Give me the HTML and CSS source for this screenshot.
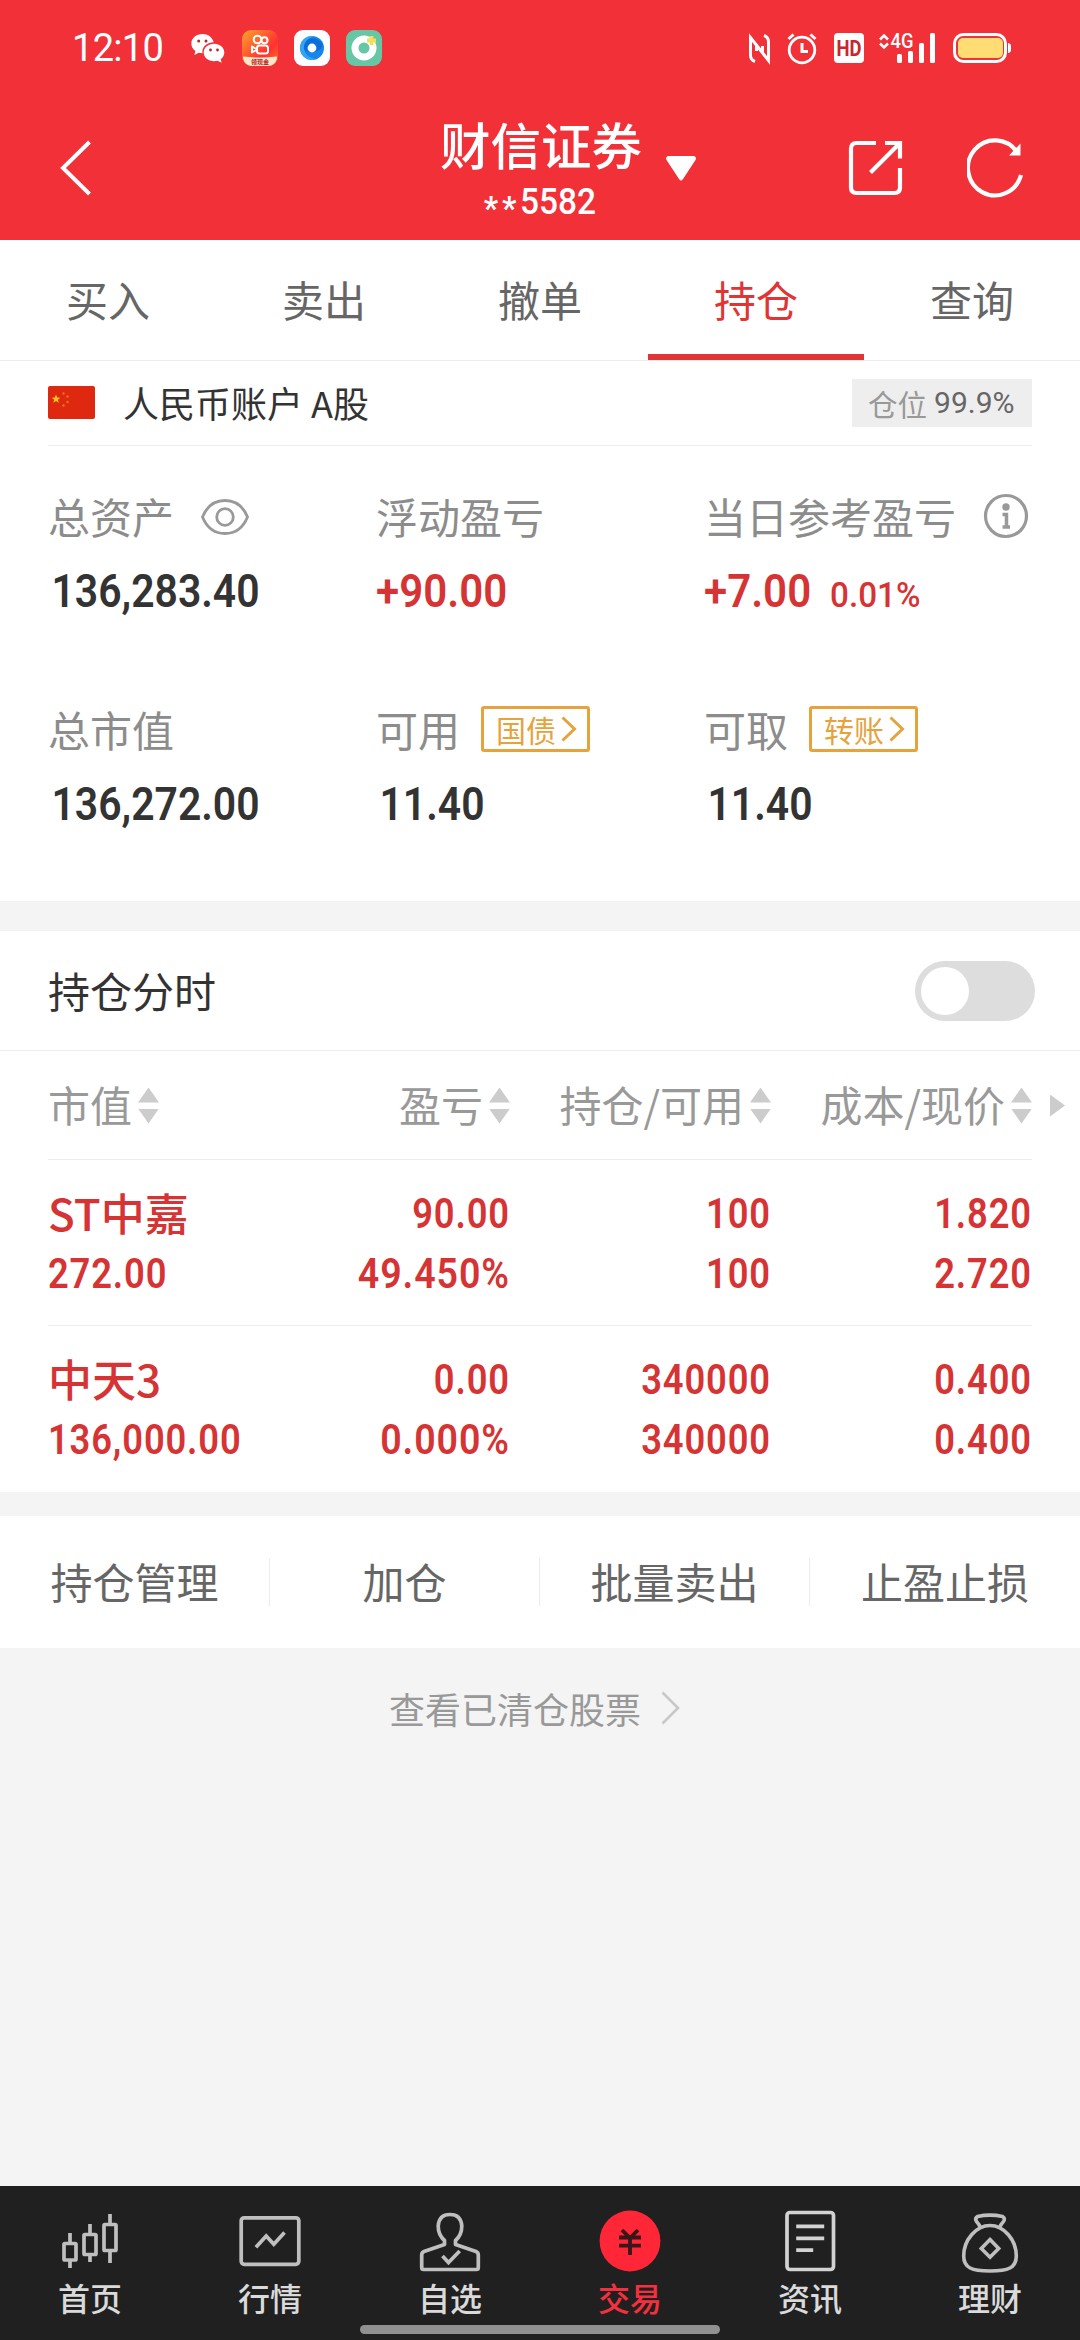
FILE: index.html
```html
<!DOCTYPE html>
<html lang="zh-CN">
<head>
<meta charset="utf-8">
<title>持仓</title>
<link rel="stylesheet" href="styles.css">
</head>
<body>
<div class="app">
  <header class="top">
    <div class="status">
      <div class="status-left">
        <span class="clock">12:10</span>
        <svg class="s-wechat" width="34" height="30" viewBox="0 0 34 30"><path fill="#fff" d="M11.500 1C5.200 1 .3 5.200.3 10.500c0 3 1.600 5.600 4.100 7.400L3.300 22l4.500-2.300c1.200.3 2.400.5 3.700.5-1-6 4-11 11.200-11C21.500 4.500 17 1 11.500 1z"/><path fill="#fff" d="M33.300 19.500c0-4.900-4.500-8.700-10.200-8.700S12.700 14.700 12.700 19.500s4.600 8.800 10.400 8.800c1.200 0 2.300-.2 3.400-.5l4.200 2-1.100-3.500c2.300-1.700 3.700-4 3.700-6.800z"/><g fill="#b9252d"><circle cx="7.700" cy="8" r="1.500"/><circle cx="15" cy="8" r="1.500"/><circle cx="19.500" cy="17" r="1.400"/><circle cx="26.500" cy="17" r="1.400"/></g></svg>
        <svg width="36" height="36" viewBox="0 0 36 36"><defs><linearGradient id="ks" x1="0" y1="0" x2="1" y2="1"><stop offset="0" stop-color="#ffa42b"/><stop offset=".65" stop-color="#fe3130"/><stop offset="1" stop-color="#ff7a22"/></linearGradient></defs><rect width="36" height="36" rx="9" fill="url(#ks)"/><path d="M1 26.500q17 2 34 0v2q-2 7.500-9 7.500H10q-7 0-9-7.500z" fill="#ffe6c8"/><g fill="none" stroke="#fff" stroke-width="2"><circle cx="15.500" cy="9.500" r="3.800"/><circle cx="22.500" cy="10.300" r="3"/><rect x="15" y="15.500" width="11" height="8" rx="2.500"/><path d="M15 19.500 10 16.500v6z" stroke-linejoin="round"/></g><text x="9" y="34" font-size="6" class="mini">领现金</text></svg>
        <svg width="36" height="36" viewBox="0 0 36 36"><rect width="36" height="36" rx="9" fill="#fbfdff"/><circle cx="18" cy="18" r="12" fill="#1686ea"/><path d="M7 14Q18 2 29 14q-2 8-11 8-10 0-11-8z" fill="#0b6fd6"/><path d="M6 18a12 12 0 0 1 15-11.600Q9 9 10 19q1 8 12 10A12 12 0 0 1 6 18z" fill="#35a4f5"/><circle cx="18" cy="18" r="4.400" fill="#fff"/></svg>
        <svg width="36" height="36" viewBox="0 0 36 36"><rect width="36" height="36" rx="9" fill="#67c6a4"/><circle cx="18" cy="18" r="9" fill="none" stroke="#fff" stroke-width="7"/><path d="M25.500 6v9M21 10.500h9" stroke="#f5de5c" stroke-width="3.800"/></svg>
      </div>
      <svg class="status-right" width="270" height="36" viewBox="744 30 270 36">
        <g fill="none" stroke="#fff">
          <path stroke-width="3" d="M755 61.500Q750.500 60 750.500 55V37.500L768.500 60.500V42Q768.500 37 764 35.500"/><path stroke-width="3" d="M756.500 51V44M762.500 46v7"/>
          <circle cx="802" cy="50" r="12.800" stroke-width="2.800"/><path stroke-width="3" d="M802 43v8.500h6M788.500 39l5-4.500M815.500 39l-5-4.500"/>
          <path stroke-width="2.600" d="M880 39.500l4-4 4 4M880 43.500l4 4 4-4"/>
          <rect x="954.500" y="34.500" width="51" height="27" rx="9" stroke-width="3"/>
        </g>
        <rect x="834" y="33" width="30" height="30" rx="4" fill="#fff"/>
        <text class="hd" x="836.500" y="55.500" textLength="25" lengthAdjust="spacingAndGlyphs">HD</text>
        <text class="g4" x="890.500" y="48" textLength="23" lengthAdjust="spacingAndGlyphs">4G</text>
        <g fill="#fff"><rect x="897" y="54" width="5" height="9" rx="1.500"/><rect x="908" y="51" width="5" height="12" rx="1.500"/><rect x="919" y="43" width="5" height="20" rx="1.500"/><rect x="930" y="33" width="5" height="30" rx="1.500"/><path d="M1008 43q3 .5 3 3v4q0 2.500-3 3z"/></g>
        <rect x="958" y="38" width="45" height="20" rx="5" fill="#ffdc74"/>
      </svg>
    </div>
    <div class="titlebar">
      <div class="back"><svg width="34" height="58" viewBox="0 0 34 58"><path d="M31.500 3 5 29l26.500 26" fill="none" stroke="#fff" stroke-width="4"/></svg></div>
      <div class="title"><div class="broker">财信证券</div><div class="acct"><span class="stars">**</span>5582</div></div>
      <div class="tools">
        <svg class="caret" width="30" height="25" viewBox="0 0 30 25"><path d="M2 0h26q3 1 1.500 4L17 23q-2 3-4 0L.5 4Q-1 1 2 0z" fill="#fff"/></svg>
        <svg class="share" width="56" height="56" viewBox="0 0 56 56"><g fill="none" stroke="#fff" stroke-width="4.200"><path d="M28 3H8.500Q3 3 3 8.500v39Q3 53 8.500 53h38q5.500 0 5.500-5.500V28"/><path d="M37 3h15v15.500M52 3 22.500 32.500"/></g></svg>
        <svg width="58" height="60" viewBox="0 0 58 60"><path d="M54 37A27 27.500 0 1 1 50 14" fill="none" stroke="#fff" stroke-width="4.200"/><path d="M53.500 5.500V17.500H42z" fill="#fff"/></svg>
      </div>
    </div>
  </header>

  <nav class="tabs"><a>买入</a><a>卖出</a><a>撤单</a><a class="on">持仓</a><a>查询</a></nav>

  <section class="account">
    <svg class="flag" width="47" height="33" viewBox="0 0 47 33"><rect width="47" height="33" rx="2" fill="#de2910"/><path fill="#ffc31b" d="M8 8.500l1.200 3 3.200.2-2.500 2 .9 3.100L8 15l-2.700 1.800.9-3.100-2.500-2 3.100-.2z"/><g fill="#f0701c"><circle cx="15.500" cy="7.500" r="1.200"/><circle cx="19.500" cy="10.500" r="1.200"/><circle cx="19.500" cy="16" r="1.200"/><circle cx="15.500" cy="19.500" r="1.200"/></g></svg>
    <span class="acct-name">人民币账户 A股</span>
    <span class="pos"><span class="pos-k">仓位</span><span class="pos-v">99.9%</span></span>
  </section>

  <section class="assets">
    <div class="cell"><div class="k">总资产<svg class="eye" width="48" height="36" viewBox="0 0 48 36"><g fill="none" stroke="#999" stroke-width="2.800"><path d="M1.500 18C6 7 14 1.500 24 1.500S42 7 46.500 18C42 29 34 34.500 24 34.500S6 29 1.500 18z"/><circle cx="24" cy="18" r="8.300"/></g></svg></div><div class="v"><span class="n">136,283.40</span></div></div>
    <div class="cell"><div class="k">浮动盈亏</div><div class="v red"><span class="n">+90.00</span></div></div>
    <div class="cell"><div class="k">当日参考盈亏<svg class="info" width="46" height="46" viewBox="0 0 46 46"><circle cx="23" cy="23" r="20.500" fill="none" stroke="#999" stroke-width="3.200"/><circle cx="23" cy="14" r="3.700" fill="#999"/><path d="M19.500 21.500h4V34M19.500 34h7.500" fill="none" stroke="#999" stroke-width="3.500"/></svg></div><div class="v red"><span class="n w7">+7.00</span><span class="pct">0.01%</span></div></div>
    <div class="cell"><div class="k">总市值</div><div class="v"><span class="n">136,272.00</span></div></div>
    <div class="cell"><div class="k">可用<span class="tag">国债<svg width="16" height="26" viewBox="0 0 16 26"><path d="M1.500 1.500 13.500 13 1.500 24.500" fill="none" stroke="#e6a23c" stroke-width="3"/></svg></span></div><div class="v"><span class="n">11.40</span></div></div>
    <div class="cell"><div class="k">可取<span class="tag">转账<svg width="16" height="26" viewBox="0 0 16 26"><path d="M1.500 1.500 13.500 13 1.500 24.500" fill="none" stroke="#e6a23c" stroke-width="3"/></svg></span></div><div class="v"><span class="n">11.40</span></div></div>
  </section>

  <section class="intraday"><span class="label">持仓分时</span><span class="switch"><i></i></span></section>

  <section class="holdings">
    <div class="row head">
      <div class="th"><span>市值</span><i class="sort"></i></div><div class="th"><span>盈亏</span><i class="sort"></i></div><div class="th"><span>持仓/可用</span><i class="sort"></i></div><div class="th"><span>成本/现价</span><i class="sort"></i></div><i class="more"></i>
    </div>
    <div class="row item">
      <div class="td"><b>ST中嘉</b><span>272.00</span></div><div class="td"><span>90.00</span><span class="wide">49.450%</span></div><div class="td"><span>100</span><span>100</span></div><div class="td"><span>1.820</span><span>2.720</span></div>
    </div>
    <div class="row item">
      <div class="td"><b>中天3</b><span>136,000.00</span></div><div class="td"><span>0.00</span><span class="wide">0.000%</span></div><div class="td"><span>340000</span><span>340000</span></div><div class="td"><span>0.400</span><span>0.400</span></div>
    </div>
  </section>

  <nav class="actions"><a>持仓管理</a><a>加仓</a><a>批量卖出</a><a>止盈止损</a></nav>

  <a class="cleared">查看已清仓股票<svg width="19" height="34" viewBox="0 0 19 34"><path d="M1.500 1.500 17 17 1.500 32.500" fill="none" stroke="#c8c8c8" stroke-width="2.600"/></svg></a>

  <footer class="bottom">
    <div class="bar">
      <a><svg width="64" height="68" viewBox="0 0 64 68"><g fill="none" stroke="#bfbfbf" stroke-width="3.700"><rect x="6" y="35.500" width="12" height="16.500" rx="1"/><path d="M12 25v10M12 52v8"/><rect x="26" y="26.500" width="12" height="20" rx="1"/><path d="M32 16v10M32 47v7"/><rect x="46" y="16.500" width="12" height="26" rx="1"/><path d="M52 6v10M52 43v12"/></g></svg>首页</a>
      <a><svg width="64" height="68" viewBox="0 0 64 68"><g fill="none" stroke="#bfbfbf" stroke-width="3.700"><rect x="3.200" y="9.800" width="57.600" height="46.500" rx="3"/><path d="M17.900 39.300 28.200 28l7.600 8.300L46.500 24.500"/></g></svg>行情</a>
      <a><svg width="64" height="68" viewBox="0 0 64 68"><g fill="none" stroke="#bfbfbf" stroke-width="3.700"><path stroke-linejoin="round" d="M26.500 36.500v-4Q20.200 27 20.200 18 21 6.500 32 6.500T43.800 18q0 9-6.300 14.500v4L58 43.500q2.300 1 2.300 3.500v12.500q0 2-2 2H5.700q-2 0-2-2V47q0-2.500 2.300-3.500z"/><path d="M24.500 48l6 6.500L41.700 43"/></g></svg>自选</a>
      <a class="on"><svg width="64" height="68" viewBox="0 0 64 68"><circle cx="32" cy="33" r="30.400" fill="#ff2737"/><path d="M24 22l8 8 8-8M21 29.500h22M21 37.700h22M32 29v18" fill="none" stroke="#3a1519" stroke-width="3.800"/></svg>交易</a>
      <a><svg width="64" height="68" viewBox="0 0 64 68"><g fill="none" stroke="#d2d2d2" stroke-width="3.700"><rect x="9" y="4.500" width="46.500" height="57" rx="3"/><path d="M18.200 18.300h28M18.200 30.300h28M18.200 42.200h17"/></g></svg>资讯</a>
      <a><svg width="64" height="68" viewBox="0 0 64 68"><g fill="none" stroke="#bfbfbf" stroke-width="3.600"><path d="M23 20.500Q21 16 18.500 13.500 16.500 10.500 19.500 8.500 32 5.800 44.500 8.500 47.500 10.500 45.500 13.500 43 16 41 20.500"/><path d="M32 17.500C46 17.500 58.300 32 58.300 48 58.300 60 50 63 32 63S5.700 60 5.700 48C5.700 32 18 17.500 32 17.500z"/><path d="M32 31.500l8.700 9L32 49.300l-8.700-8.800z"/></g></svg>理财</a>
    </div>
    <div class="home"></div>
  </footer>
</div>
</body>
</html>
```
FILE: styles.css
```css
* { box-sizing: border-box; }
body {
  margin: 0;
  background: #f4f4f4;
  color: #333;
  font-family: "Noto Sans CJK SC", "Noto Sans", sans-serif;
  font-weight: 400;
}
svg { display: block; flex: none; }
.app { width: 1080px; height: 2340px; display: flex; flex-direction: column; overflow: hidden; }

/* header */
.top { height: 240px; background: #f13038; color: #fff; }
.status { height: 96px; padding: 0 66px 0 72px; display: flex; align-items: center; justify-content: space-between; }
.status-left { display: flex; align-items: center; gap: 16px; }
.clock { width: 103px; font: 400 38px/48px Roboto, sans-serif; letter-spacing: -0.7px; }
.s-wechat { margin-right: 1px; }
.mini { fill: #b3261e; font-weight: 700; }
.hd { font: 700 22px Roboto, sans-serif; fill: #c5282f; }
.g4 { font: 500 20px Roboto, sans-serif; fill: #fff; }
.titlebar { height: 144px; display: grid; grid-template-columns: 440px 200px 440px; }
.back { padding: 43px 0 0 58px; }
.title { text-align: center; white-space: nowrap; }
.broker { height: 80px; padding-top: 11px; font-size: 50.5px; line-height: 72px; font-weight: 500; }
.acct { font: 500 36px/52px Roboto, sans-serif; transform: scaleX(.93); }
.stars { vertical-align: -6px; letter-spacing: 4px; font-size: 34px; font-weight: 700; line-height: 40px; }
.tools { display: flex; align-items: center; padding: 0 54px 0 26px; }
.share { margin: 0 63px 0 152px; }

/* tabs */
.tabs { height: 121px; background: #fff; border-bottom: 1px solid #ececec; display: grid; grid-template-columns: repeat(5, 1fr); }
.tabs a { text-align: center; font-size: 42px; line-height: 118px; color: #666; }
.tabs .on { color: #df3535; box-shadow: inset 0 -6px #df3535; }

/* account line */
.account { height: 85px; background: linear-gradient(#ececec, #ececec) 48px 84px / 984px 1px no-repeat #fff; padding: 0 48px 2px; display: flex; align-items: center; }
.acct-name { margin-left: 28px; font-size: 36px; line-height: 80px; padding-bottom: 2px; flex: 1; }
.pos { width: 180px; height: 48px; background: #eee; display: flex; align-items: center; padding-left: 16px; font-size: 29.5px; line-height: 46px; color: #999; }
.pos-v { margin-left: 7px; font: 400 30px/48px Roboto, sans-serif; color: #666; }

/* asset figures */
.assets { height: 455px; background: #fff; padding: 34px 0 0 48px; display: grid; grid-template-columns: repeat(3, 328px); grid-template-rows: 213px 213px; }
.k { height: 74px; display: flex; align-items: flex-start; font-size: 42px; line-height: 72px; color: #8c8c8c; white-space: nowrap; }
.eye { margin: 19px 0 0 27px; }
.info { margin: 13px 0 0 27px; }
.v { height: 72px; display: flex; align-items: baseline; font: 600 47px/74px Roboto, sans-serif; color: #333; }
.n { transform: scaleX(.87); transform-origin: 0 50%; padding-left: 4px; }
.red { color: #d63434; }
.red .n { padding-left: 0; transform: scaleX(.895); }
.w7 { width: 116px; }
.pct { font-size: 35px; font-weight: 500; margin-left: 10px; transform: scaleX(.95); transform-origin: 0 50%; }
.tag { margin: 13px 0 0 21px; width: 109px; height: 46px; border: 3px solid #e6a23c; border-radius: 3px; display: flex; align-items: center; padding-left: 12px; gap: 5px; font-size: 30px; line-height: 36px; color: #e6a23c; }

/* intraday switch */
.intraday { height: 120px; margin-top: 30px; background: #fff; border-bottom: 1px solid #ececec; padding: 0 45px 0 48px; display: flex; align-items: center; justify-content: space-between; font-size: 42px; line-height: 116px; }
.label { padding-bottom: 2px; }
.switch { width: 120px; height: 60px; border-radius: 30px; background: #ddd; padding: 6px; }
.switch i { display: block; width: 48px; height: 48px; border-radius: 50%; background: #fff; }

/* holdings */
.holdings { background: #fff; padding: 0 15px 0 48px; }
.row { display: grid; grid-template-columns: 201px 261px 261px 261px 33px; background: linear-gradient(#ececec, #ececec) 0 100% / 984px 1px no-repeat; }
.head { height: 109px; }
.th { display: flex; align-items: center; justify-content: flex-end; gap: 6px; font-size: 42px; line-height: 104px; color: #999; white-space: nowrap; }
.th span { padding-bottom: 3px; }
.th:first-child { justify-content: flex-start; }
.sort { width: 21px; height: 36px; display: grid; align-content: space-between; }
.sort::before, .sort::after { content: ""; height: 15px; background: #ccc; clip-path: polygon(50% 0, 100% 100%, 0 100%); }
.sort::after { clip-path: polygon(0 0, 100% 0, 50% 100%); }
.more { align-self: center; justify-self: end; width: 15px; height: 22px; background: #ccc; clip-path: polygon(0 0, 100% 50%, 0 100%); }
.item { height: 166px; padding-top: 24px; }
.item:last-child { background: none; }
.td { display: flex; flex-direction: column; align-items: flex-end; color: #d63434; white-space: nowrap; }
.td:first-child { align-items: flex-start; }
.td b { height: 60px; font-size: 44px; line-height: 56px; font-weight: 500; }
.td span { height: 60px; font: 600 42px/60px Roboto, sans-serif; letter-spacing: 1px; transform: scaleX(.865); transform-origin: 100% 50%; }
.td .wide { transform: scaleX(.895); }
.td:first-child span { transform-origin: 0 50%; }

/* actions */
.actions { height: 132px; margin-top: 24px; background: #fff; display: grid; grid-template-columns: repeat(4, 1fr); align-items: center; }
.actions a { height: 48px; font-size: 42px; line-height: 46px; color: #666; text-align: center; border-right: 1px solid #ececec; }
.actions a:last-child { border-right: 0; }
.cleared { height: 120px; display: flex; align-items: center; justify-content: center; gap: 20px; font-size: 36px; color: #999; padding-right: 11px; }

/* bottom navigation */
.bottom { margin-top: auto; height: 154px; background: #202020; }
.bar { height: 139px; display: grid; grid-template-columns: repeat(6, 1fr); }
.bar a { display: flex; flex-direction: column; align-items: center; padding-top: 22px; font-size: 32px; line-height: 42px; font-weight: 500; color: #dadada; }
.bar .on { color: #f5303e; }
.home { width: 360px; height: 9px; margin: 0 auto; border-radius: 5px; background: #909090; }
```
